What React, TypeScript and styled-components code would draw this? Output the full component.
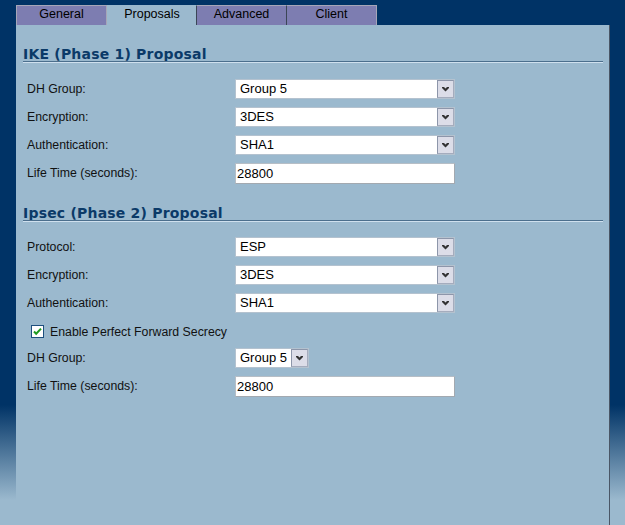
import styled, { createGlobalStyle } from 'styled-components';

const GlobalStyle = createGlobalStyle`
  html, body {
    margin: 0;
    padding: 0;
  }
  body {
    background: #9bb9ce;
    font-family: 'Liberation Sans', Arial, sans-serif;
  }
`;

const Page = styled.div`
  width: 625px;
  height: 525px;
  box-sizing: border-box;
  padding: 5px 15px 0 16px;
  display: flex;
  flex-direction: column;
  background: linear-gradient(
    to bottom,
    #003366 0,
    #003366 405px,
    #9bb9ce 500px
  );
  overflow: hidden;
`;

const TabBar = styled.div`
  display: flex;
  height: 20px;
`;

const Tab = styled.div<{ $active?: boolean }>`
  width: 90px;
  box-sizing: border-box;
  height: 20px;
  display: flex;
  justify-content: center;
  align-items: center;
  padding-bottom: 4px;
  font-size: 12.5px;
  color: #000;
  background: ${({ $active }) => ($active ? '#9bb9ce' : '#7d7db1')};
  border-top: 1px solid ${({ $active }) => ($active ? '#9bb9ce' : '#a6a6b8')};
  border-left: 1px solid ${({ $active }) => ($active ? '#9bb9ce' : '#a6a6b8')};
  border-right: 1px solid ${({ $active }) => ($active ? '#3b4656' : '#a6a6b8')};

  &:first-child {
    width: 91px;
  }
  &:nth-child(3) {
    border-left: none;
    border-right-color: #3b4656;
  }
  &:nth-child(4) {
    border-left: none;
  }
`;

const Panel = styled.div`
  flex: 1;
  width: 594px;
  box-sizing: border-box;
  background: #9bb9ce;
  border-right: 1px solid #4a5666;
  padding: 18px 6px 0 7px;
`;

const Section = styled.section<{ $gap?: number }>`
  margin-top: ${({ $gap }) => $gap ?? 0}px;
`;

const Heading = styled.h2<{ $after?: number }>`
  margin: 0 0 ${({ $after }) => $after ?? 13}px;
  height: 18px;
  line-height: 22px;
  overflow: hidden;
  font-family: 'DejaVu Sans', Verdana, sans-serif;
  font-size: 14px;
  letter-spacing: 0.2px;
  font-weight: bold;
  color: #0b3a68;
  border-bottom: 1px solid #4c6f8d;
  box-shadow: 0 1px 0 #cfe0ee;
`;

const Row = styled.div`
  display: grid;
  grid-template-columns: 208px 1fr;
  align-items: center;
  height: 28px;
  padding-left: 4px;
`;

const Label = styled.span`
  font-size: 12.3px;
  color: #111;
`;

const SelectBox = styled.div<{ $width: number }>`
  width: ${({ $width }) => $width}px;
  height: 20px;
  box-sizing: border-box;
  display: flex;
  background: #fff;
  border: 1px solid #b4c2cf;
`;

const SelectValue = styled.span`
  flex: 1;
  padding-left: 4px;
  font-size: 13px;
  line-height: 18px;
  color: #000;
  white-space: nowrap;
`;

const ArrowButton = styled.span`
  width: 17px;
  box-sizing: border-box;
  display: flex;
  align-items: center;
  justify-content: center;
  background: #dcdde8;
  border: 1px solid #8d96aa;
  border-right-color: #a5acbd;
  border-bottom-color: #a5acbd;
`;

const TextInput = styled.div`
  width: 220px;
  height: 21px;
  box-sizing: border-box;
  background: #fff;
  border: 1px solid #b6bec6;
  border-right-color: #a3a9b0;
  border-bottom-color: #a3a9b0;
  padding-left: 1px;
  font-size: 13px;
  line-height: 19px;
  color: #000;
`;

const CheckRow = styled.label`
  display: flex;
  align-items: center;
  gap: 6px;
  height: 27px;
  box-sizing: border-box;
  padding: 2px 0 0 8px;
`;

const CheckBox = styled.span`
  width: 13px;
  height: 13px;
  box-sizing: border-box;
  display: flex;
  align-items: center;
  justify-content: center;
  background: #fff;
  border: 1px solid #1d4f7e;
`;

const Chevron = () => (
  <svg width="7" height="5" viewBox="0 0 7 5">
    <path d="M0 0h2l1.5 1.5L5 0h2v1L3.5 4.5 0 1z" fill="#333" />
  </svg>
);

const Check = () => (
  <svg width="9" height="9" viewBox="0 0 9 9">
    <path d="M1 4.5l2.2 2.3L8 1.6" stroke="#1f9a1f" strokeWidth="2" fill="none" />
  </svg>
);

const Select = ({ value, width = 220 }: { value: string; width?: number }) => (
  <SelectBox $width={width}>
    <SelectValue>{value}</SelectValue>
    <ArrowButton>
      <Chevron />
    </ArrowButton>
  </SelectBox>
);

const tabs = ['General', 'Proposals', 'Advanced', 'Client'];

const App = () => (
  <>
    <GlobalStyle />
    <Page>
      <TabBar>
        {tabs.map((t) => (
          <Tab key={t} $active={t === 'Proposals'}>
            {t}
          </Tab>
        ))}
      </TabBar>
      <Panel>
        <Section>
          <Heading>IKE (Phase 1) Proposal</Heading>
          <Row>
            <Label>DH Group:</Label>
            <Select value="Group 5" />
          </Row>
          <Row>
            <Label>Encryption:</Label>
            <Select value="3DES" />
          </Row>
          <Row>
            <Label>Authentication:</Label>
            <Select value="SHA1" />
          </Row>
          <Row>
            <Label>Life Time (seconds):</Label>
            <TextInput>28800</TextInput>
          </Row>
        </Section>
        <Section $gap={15}>
          <Heading $after={12}>Ipsec (Phase 2) Proposal</Heading>
          <Row>
            <Label>Protocol:</Label>
            <Select value="ESP" />
          </Row>
          <Row>
            <Label>Encryption:</Label>
            <Select value="3DES" />
          </Row>
          <Row>
            <Label>Authentication:</Label>
            <Select value="SHA1" />
          </Row>
          <CheckRow>
            <CheckBox>
              <Check />
            </CheckBox>
            <Label>Enable Perfect Forward Secrecy</Label>
          </CheckRow>
          <Row>
            <Label>DH Group:</Label>
            <Select value="Group 5" width={74} />
          </Row>
          <Row>
            <Label>Life Time (seconds):</Label>
            <TextInput>28800</TextInput>
          </Row>
        </Section>
      </Panel>
    </Page>
  </>
);

export default App;
